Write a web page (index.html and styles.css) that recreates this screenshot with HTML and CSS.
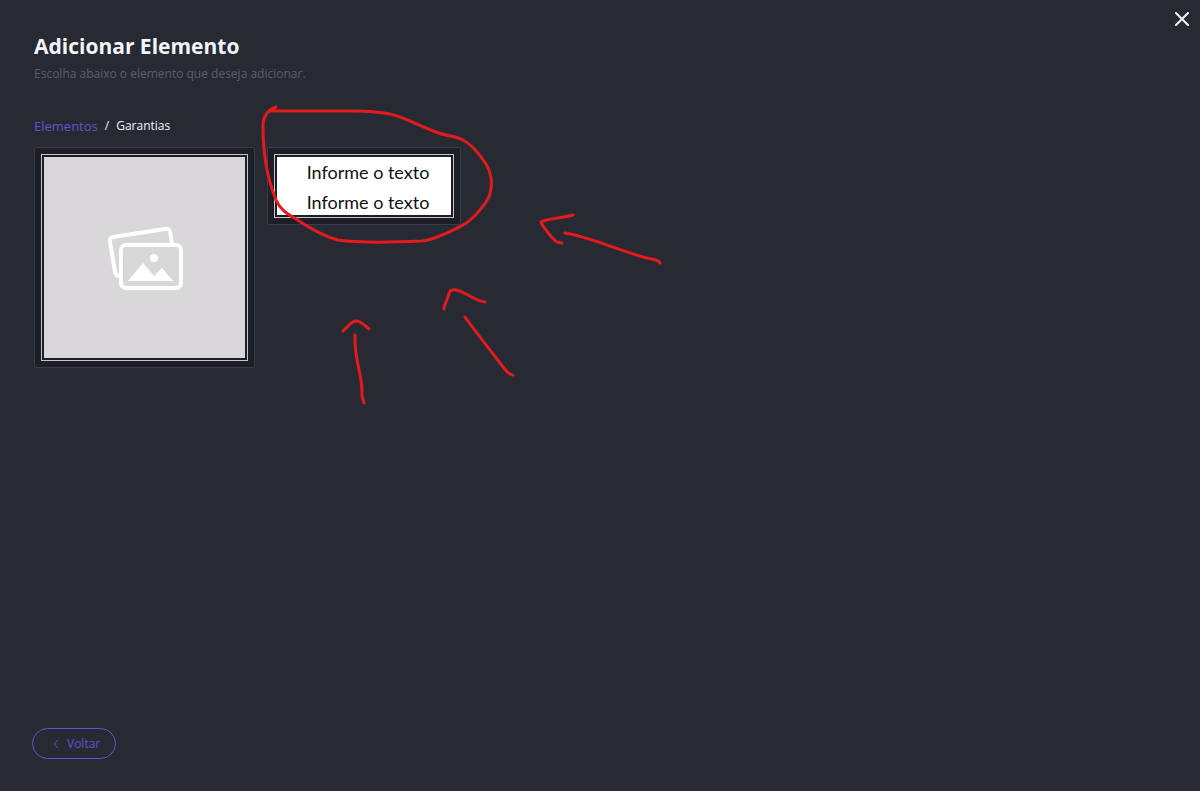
FILE: index.html
```
<!DOCTYPE html>
<html lang="pt-BR">
<head>
    <title>Adicionar Elemento</title>
    <meta charset="UTF-8">
    <meta name="viewport" content="width=device-width, initial-scale=1.0">
    <link rel="stylesheet" href="styles.css">
</head>
<body>
    <button type="button" class="close" aria-label="Fechar">
        <svg width="14" height="14" viewBox="0 0 14 14" aria-hidden="true">
            <path d="M1 1L13 13M13 1L1 13" />
        </svg>
    </button>

    <header>
        <h1>Adicionar Elemento</h1>
        <p class="subtitle">Escolha abaixo o elemento que deseja adicionar.</p>
    </header>

    <nav class="breadcrumb" aria-label="Caminho">
        <a href="#">Elementos</a>
        <span class="separator">/</span>
        <span>Garantias</span>
    </nav>

    <main class="elements">
        <button type="button" class="card" aria-label="Imagem">
            <span class="preview">
                <span class="image">
                    <svg width="76" height="66" viewBox="-1 -1 76 66" aria-hidden="true">
                        <path class="frame" d="M11 50Q8 50 7 46L2 16Q1 12 5 11L57 3Q61 2 62 6L64 18" />
                        <rect class="frame" x="13" y="19" width="60" height="43" rx="5" />
                        <circle cx="46" cy="32" r="4" />
                        <path d="M20 55L35 37L46 50L54 42L65 55Z" />
                    </svg>
                </span>
            </span>
        </button>

        <button type="button" class="card">
            <span class="preview">
                <span class="texts">
                    <span>Informe o texto</span>
                    <span>Informe o texto</span>
                </span>
            </span>
        </button>
    </main>

    <footer>
        <button type="button" class="back">
            <svg width="6" height="10" viewBox="0 0 6 10" aria-hidden="true">
                <path d="M5 1L1 5L5 9" />
            </svg>
            Voltar
        </button>
    </footer>

    <!-- Hand drawn notes over the page -->
    <svg class="notes" width="700" height="420" viewBox="0 0 700 420" aria-hidden="true">
        <path d="M276 107C268 110 263 115 263 126C263 150 267 178 276 200C281 211 288 214 296 219C308 227 322 236 338 240C358 243 400 242 422 241C438 239 455 229 465 224C474 218 487 203 490 194C493 182 491 172 486 164C480 155 471 144 463 140C455 136 446 136 436 132C420 126 404 117 390 114C370 110 360 111 340 111L270 111" />
        <path d="M573 215C562 218 545 219 541 222C541 224 553 240 557 242L562 243M565 233C590 237 615 249 643 257C653 260 658 259 660 263" />
        <path d="M444 309C443 306 448 300 449 293C451 288 457 289 466 294C474 298 477 301 485 302M465 317C480 338 493 353 503 367C507 372 510 375 513 375" />
        <path d="M343 331C349 326 351 321 356 321C361 321 364 325 369 329M355 335C354 363 363 373 362 396L364 403" />
    </svg>
</body>
</html>
```
FILE: styles.css
```
* {
    box-sizing: border-box;
}

body {
    font-family: "Open Sans", "Noto Sans", sans-serif;
    margin: 0;
    padding: 32px 34px;
    min-height: 100vh;
    display: flex;
    flex-direction: column;
    background-color: #272a33;
    color: #f4f5fa;
}

h1 {
    margin: 0;
    font-size: 21px;
    line-height: 28px;
}

button {
    font-family: inherit;
    cursor: pointer;
}

svg {
    fill: none;
    stroke: currentColor;
    stroke-linecap: round;
    stroke-linejoin: round;
}

.close {
    position: absolute;
    top: 8px;
    right: 7px;
    padding: 4px;
    display: flex;
    border: none;
    background: none;
    color: #f4f5fa;
    stroke-width: 2;
}

.subtitle {
    margin: 4px 0 0;
    font-size: 12px;
    line-height: 20px;
    color: #5c606d;
}

.breadcrumb {
    margin-top: 32px;
    display: flex;
    gap: 7px;
    font-size: 12px;
    line-height: 20px;
}

.breadcrumb a {
    font-size: 13px;
    color: #6552d0;
    text-decoration: none;
}

.elements {
    margin-top: 11px;
    flex: 1;
    display: flex;
    flex-wrap: wrap;
    align-items: flex-start;
    gap: 12px;
}

.card {
    padding: 6px;
    border: 1px solid #363b50;
    border-radius: 2px;
    background-color: #1d1e26;
}

.preview {
    display: block;
    padding: 2px;
    border: 1px solid #c4c5c9;
}

.image {
    width: 201px;
    height: 201px;
    display: flex;
    align-items: center;
    justify-content: center;
    background-color: #d9d7da;
    color: white;
}

.image svg {
    fill: white;
    stroke: none;
}

.image .frame {
    fill: none;
    stroke: white;
    stroke-width: 4;
}

.texts {
    width: 174px;
    height: 58px;
    padding-left: 8px;
    display: block;
    overflow: hidden;
    background-color: white;
    color: #111111;
    font-family: Lato, sans-serif;
    font-size: 18px;
    line-height: 30px;
    text-align: center;
}

.texts span {
    display: block;
}

.back {
    margin-left: -2px;
    height: 31px;
    padding: 0 15px 0 20px;
    display: flex;
    align-items: center;
    gap: 8px;
    border: 1px solid #6552d0;
    border-radius: 16px;
    background: none;
    color: #6552d0;
    font-size: 12px;
}

.back svg {
    stroke-width: 1;
}

.notes {
    position: absolute;
    top: 0;
    left: 0;
    color: #e31b1d;
    stroke-width: 3;
    pointer-events: none;
}
```
